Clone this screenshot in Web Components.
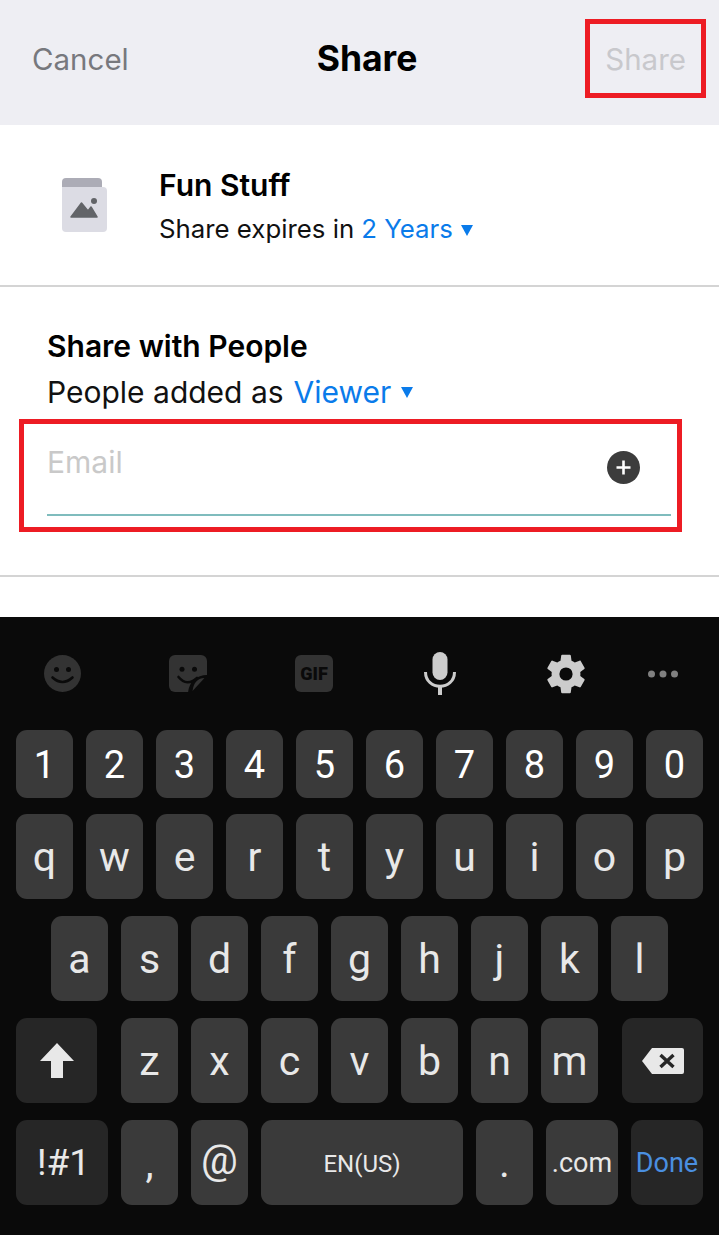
<!DOCTYPE html>
<html lang="en">
<head>
<meta charset="utf-8">
<title>Share</title>
<style>
  html, body { margin: 0; padding: 0; background: #fff; }
  body { width: 719px; height: 1235px; overflow: hidden; display: flex; flex-direction: column; font-family: "Inter", "Liberation Sans", sans-serif; }
</style>
</head>
<body>
<share-header></share-header>
<album-row name="Fun Stuff"></album-row>
<people-section></people-section>
<kb-panel>
  <kb-toolbar></kb-toolbar>
  <kb-row num><kb-key num>1</kb-key><kb-key num>2</kb-key><kb-key num>3</kb-key><kb-key num>4</kb-key><kb-key num>5</kb-key><kb-key num>6</kb-key><kb-key num>7</kb-key><kb-key num>8</kb-key><kb-key num>9</kb-key><kb-key num>0</kb-key></kb-row>
  <kb-row><kb-key>q</kb-key><kb-key>w</kb-key><kb-key>e</kb-key><kb-key>r</kb-key><kb-key>t</kb-key><kb-key>y</kb-key><kb-key>u</kb-key><kb-key>i</kb-key><kb-key>o</kb-key><kb-key>p</kb-key></kb-row>
  <kb-row indent><kb-key>a</kb-key><kb-key>s</kb-key><kb-key>d</kb-key><kb-key>f</kb-key><kb-key>g</kb-key><kb-key>h</kb-key><kb-key>j</kb-key><kb-key>k</kb-key><kb-key>l</kb-key></kb-row>
  <kb-row>
    <kb-key fn style="--w:81px;--ty:0px;margin-right:11px"><svg width="36" height="36" viewBox="0 0 36 36"><path d="M18 0 L35 18 H24 V35 H12 V18 H1 Z" fill="#e8e8e8"/></svg></kb-key>
    <kb-key>z</kb-key><kb-key>x</kb-key><kb-key>c</kb-key><kb-key>v</kb-key><kb-key>b</kb-key><kb-key>n</kb-key><kb-key>m</kb-key>
    <kb-key fn style="--w:81px;--ty:0px;margin-left:11px"><svg width="42" height="26" viewBox="0 0 42 26"><path d="M10 0 H40 Q42 0 42 2 V24 Q42 26 40 26 H10 L0 13 Z" fill="#e8e8e8"/><path d="M18.500 7 L31.500 19 M31.500 7 L18.500 19" stroke="#262626" stroke-width="3.400" fill="none"/></svg></kb-key>
  </kb-row>
  <kb-row>
    <kb-key fn style="--w:92px;--fs:37px;--ty:0px;padding-left:3px;box-sizing:border-box">!#1</kb-key>
    <kb-key>,</kb-key>
    <kb-key style="--fs:41px;--ty:-2px">@</kb-key>
    <kb-key style="--w:202px;--fs:24px">EN(US)</kb-key>
    <kb-key>.</kb-key>
    <kb-key style="--w:72px;--fs:27px">.com</kb-key>
    <kb-key fn style="--w:72px;--fs:27px;--c:#4a8fe0">Done</kb-key>
  </kb-row>
</kb-panel>

<script>
class ShareHeader extends HTMLElement {
  constructor() {
    super();
    this.attachShadow({ mode: 'open' });
    this.shadowRoot.innerHTML = `
      <style>
        :host { display: block; position: relative; flex: none; height: 125px; background: #eeeef3; }
        .bar { display: grid; grid-template-columns: 1fr auto 1fr; align-items: center; height: 118px; padding: 0 33px 0 32px; }
        .cancel { font-size: 29.500px; color: #77787d; }
        .title { font-size: 35.500px; font-weight: 700; color: #000; margin: 0 0 2px 16px; }
        .action { font-size: 29.500px; color: #c8c8cc; justify-self: end; }
        .mark { position: absolute; left: 585px; top: 19px; width: 121px; height: 79px; box-sizing: border-box; border: 5px solid #ed1c24; }
      </style>
      <div class="bar">
        <span class="cancel">Cancel</span>
        <span class="title">Share</span>
        <span class="action">Share</span>
      </div>
      <div class="mark"></div>
    `;
  }
}

class AlbumRow extends HTMLElement {
  constructor() {
    super();
    this.attachShadow({ mode: 'open' });
    this.shadowRoot.innerHTML = `
      <style>
        :host { display: flex; flex: none; height: 160px; box-sizing: content-box; border-bottom: 2px solid #d4d4d4; }
        svg { flex: none; margin: 53px 52px 0 62px; }
        .text { padding-top: 40px; }
        .name { font-size: 30px; font-weight: 600; line-height: 40px; color: #000; }
        .sub { font-size: 25.800px; line-height: 36px; margin-top: 6px; color: #111; display: flex; align-items: center; }
        .sub b { font-weight: 400; color: #0a7bea; margin-left: 7px; }
        .sub svg { margin: 2px 0 0 8px; }
      </style>
      <svg width="45" height="54" viewBox="0 0 45 54">
        <path d="M4 0 H36 Q40 0 40 4 V9 H0 V4 Q0 0 4 0 Z" fill="#acacb6"/>
        <path d="M0 9 H41 Q45 9 45 13 V50 Q45 54 41 54 H4 Q0 54 0 50 Z" fill="#dcdce4"/>
        <circle cx="32" cy="23" r="3" fill="#626468"/>
        <path d="M9 39 L19.500 25 L26 33 L29 29 L35 39 Z" fill="#626468" stroke="#626468" stroke-width="1.500" stroke-linejoin="round"/>
      </svg>
      <div class="text">
        <div class="name">${this.getAttribute('name')}</div>
        <div class="sub">Share expires in <b>2 Years</b><svg width="12" height="11" viewBox="0 0 12 11"><path d="M0 0 H12 L6 11 Z" fill="#0a7bea"/></svg></div>
      </div>
    `;
  }
}

class PeopleSection extends HTMLElement {
  constructor() {
    super();
    this.attachShadow({ mode: 'open' });
    this.shadowRoot.innerHTML = `
      <style>
        :host { display: block; flex: none; border-bottom: 2px solid #d4d4d4; padding: 39px 48px 0 47px; box-sizing: content-box; height: 249px; }
        .head { font-size: 30px; font-weight: 600; line-height: 40px; color: #000; }
        .sub { font-size: 30px; line-height: 40px; margin-top: 6px; color: #111; display: flex; align-items: center; }
        .sub b { font-weight: 400; color: #0a7bea; margin-left: 10px; }
        .sub svg { margin: 0 0 0 10px; }
        email-field { margin-top: 30px; }
      </style>
      <div class="head">Share with People</div>
      <div class="sub">People added as <b>Viewer</b><svg width="12" height="11" viewBox="0 0 12 11"><path d="M0 0 H12 L6 11 Z" fill="#0a7bea"/></svg></div>
      <email-field></email-field>
    `;
  }
}

class EmailField extends HTMLElement {
  constructor() {
    super();
    this.attachShadow({ mode: 'open' });
    this.shadowRoot.innerHTML = `
      <style>
        :host { display: block; position: relative; height: 72px; width: 624px; border-bottom: 2px solid #7fbcbd; }
        .row { display: flex; justify-content: space-between; padding-right: 31px; }
        .ph { font-size: 30px; line-height: 40px; color: #c9c9c9; }
        svg { margin-top: 9px; }
        .mark { position: absolute; left: -28px; top: -23px; width: 663px; height: 113px; box-sizing: border-box; border: 5px solid #ed1c24; }
      </style>
      <div class="row">
        <span class="ph">Email</span>
        <svg width="33" height="33" viewBox="0 0 33 33"><circle cx="16.500" cy="16.500" r="16.500" fill="#3c3c3c"/><path d="M16.500 9.500 V23.500 M9.500 16.500 H23.500" stroke="#fff" stroke-width="2.600"/></svg>
      </div>
      <div class="mark"></div>
    `;
  }
}

class KbPanel extends HTMLElement {
  constructor() {
    super();
    this.attachShadow({ mode: 'open' });
    this.shadowRoot.innerHTML = `
      <style>
        :host { display: flex; flex-direction: column; flex: 1; margin-top: 40px; background: #0a0a0a; gap: 17px; }
      </style>
      <slot></slot>
    `;
  }
}

class KbToolbar extends HTMLElement {
  constructor() {
    super();
    this.attachShadow({ mode: 'open' });
    this.shadowRoot.innerHTML = `
      <style>
        :host { display: grid; grid-template-columns: repeat(5, 126px) 68px; height: 96px; align-items: center; margin-left: -1px; }
        .cell { display: flex; justify-content: center; padding-top: 17px; }
      </style>
      <div class="cell"><svg width="37" height="37" viewBox="0 0 37 37">
        <circle cx="18.500" cy="18.500" r="18.500" fill="#333"/>
        <circle cx="12.500" cy="14.500" r="2.500" fill="#0a0a0a"/><circle cx="24.500" cy="14.500" r="2.500" fill="#0a0a0a"/>
        <path d="M8.500 22.500 Q18.500 31.500 28.500 22.500" fill="none" stroke="#0a0a0a" stroke-width="2.600" stroke-linecap="round"/>
      </svg></div>
      <div class="cell"><svg width="38" height="38" viewBox="0 0 38 38">
        <rect width="38" height="37" rx="6" fill="#333"/>
        <circle cx="13" cy="14.300" r="2.500" fill="#0a0a0a"/><circle cx="25.500" cy="14.300" r="2.500" fill="#0a0a0a"/>
        <path d="M9.500 22 Q18 32 28 23" fill="none" stroke="#0a0a0a" stroke-width="2.600" stroke-linecap="round"/>
        <path d="M38 20 C28 20 20 26 19 38 H38 Z" fill="#0a0a0a"/>
        <path d="M35.500 23 C28 23.500 24.500 28 23.500 36 Z" fill="#333"/>
      </svg></div>
      <div class="cell"><svg width="38" height="37" viewBox="0 0 38 37">
        <rect width="38" height="37" rx="6" fill="#333"/>
        <text x="19" y="25" text-anchor="middle" font-family="Roboto, sans-serif" font-weight="900" font-size="18" fill="#0a0a0a">GIF</text>
      </svg></div>
      <div class="cell"><svg width="32" height="43" viewBox="0 0 32 43" style="margin-top:-1px">
        <rect x="8.500" y="0" width="15" height="28" rx="7.500" fill="#ccc"/>
        <path d="M1.500 20 C1.500 39 30.500 39 30.500 20" fill="none" stroke="#ccc" stroke-width="3"/>
        <path d="M16 33 V43" stroke="#ccc" stroke-width="4"/>
      </svg></div>
      <div class="cell"><svg width="40" height="40" viewBox="2.400 2 19.200 20">
        <path fill="#ccc" d="M19.140 12.940c.04-.3.06-.61.06-.94 0-.32-.02-.64-.07-.94l2.030-1.580c.18-.14.23-.41.12-.61l-1.920-3.320c-.12-.22-.37-.29-.59-.22l-2.390.96c-.5-.38-1.030-.7-1.620-.94l-.36-2.540c-.04-.24-.24-.41-.48-.41h-3.840c-.24 0-.43.17-.47.41l-.36 2.540c-.59.24-1.130.57-1.620.94l-2.390-.96c-.22-.08-.47 0-.59.22L2.740 8.870c-.12.21-.08.47.12.61l2.030 1.580c-.05.3-.09.63-.09.94s.02.64.07.94l-2.030 1.580c-.18.14-.23.41-.12.61l1.920 3.320c.12.22.37.29.59.22l2.390-.96c.5.38 1.030.7 1.620.94l.36 2.540c.05.24.24.41.48.41h3.840c.24 0 .44-.17.47-.41l.36-2.540c.59-.24 1.130-.56 1.620-.94l2.390.96c.22.08.47 0 .59-.22l1.920-3.320c.12-.22.07-.47-.12-.61l-2.010-1.580z"/>
        <circle cx="12" cy="12" r="3.300" fill="#0a0a0a"/>
      </svg></div>
      <div class="cell"><svg width="30" height="8" viewBox="0 0 30 8">
        <circle cx="3.500" cy="4" r="3.500" fill="#808080"/><circle cx="15" cy="4" r="3.500" fill="#808080"/><circle cx="26.500" cy="4" r="3.500" fill="#808080"/>
      </svg></div>
    `;
  }
}

class KbRow extends HTMLElement {
  constructor() {
    super();
    this.attachShadow({ mode: 'open' });
    this.shadowRoot.innerHTML = `
      <style>
        :host { display: flex; gap: 13px; padding: 0 16px; height: 85px; }
        :host([num]) { height: 68px; margin-bottom: -1px; }
        :host([indent]) { padding-left: 51px; }
      </style>
      <slot></slot>
    `;
  }
}

class KbKey extends HTMLElement {
  constructor() {
    super();
    this.attachShadow({ mode: 'open' });
    this.shadowRoot.innerHTML = `
      <style>
        :host {
          display: flex; align-items: center; justify-content: center;
          flex: 0 0 var(--w, 57px);
          border-radius: 11px; background: #3a3a3a;
          color: var(--c, #e8e8e8);
          font-family: Roboto, "Liberation Sans", sans-serif;
          font-size: var(--fs, 41px);
        }
        :host([num]) { color: #fff; font-size: 38px; }
        :host([fn]) { background: #262626; }
        span { display: block; line-height: 1; transform: translateY(var(--ty, 1px)); }
        ::slotted(svg) { display: block; }
      </style>
      <span><slot></slot></span>
    `;
  }
}

customElements.define('share-header', ShareHeader);
customElements.define('album-row', AlbumRow);
customElements.define('people-section', PeopleSection);
customElements.define('email-field', EmailField);
customElements.define('kb-panel', KbPanel);
customElements.define('kb-toolbar', KbToolbar);
customElements.define('kb-row', KbRow);
customElements.define('kb-key', KbKey);
</script>
</body>
</html>
